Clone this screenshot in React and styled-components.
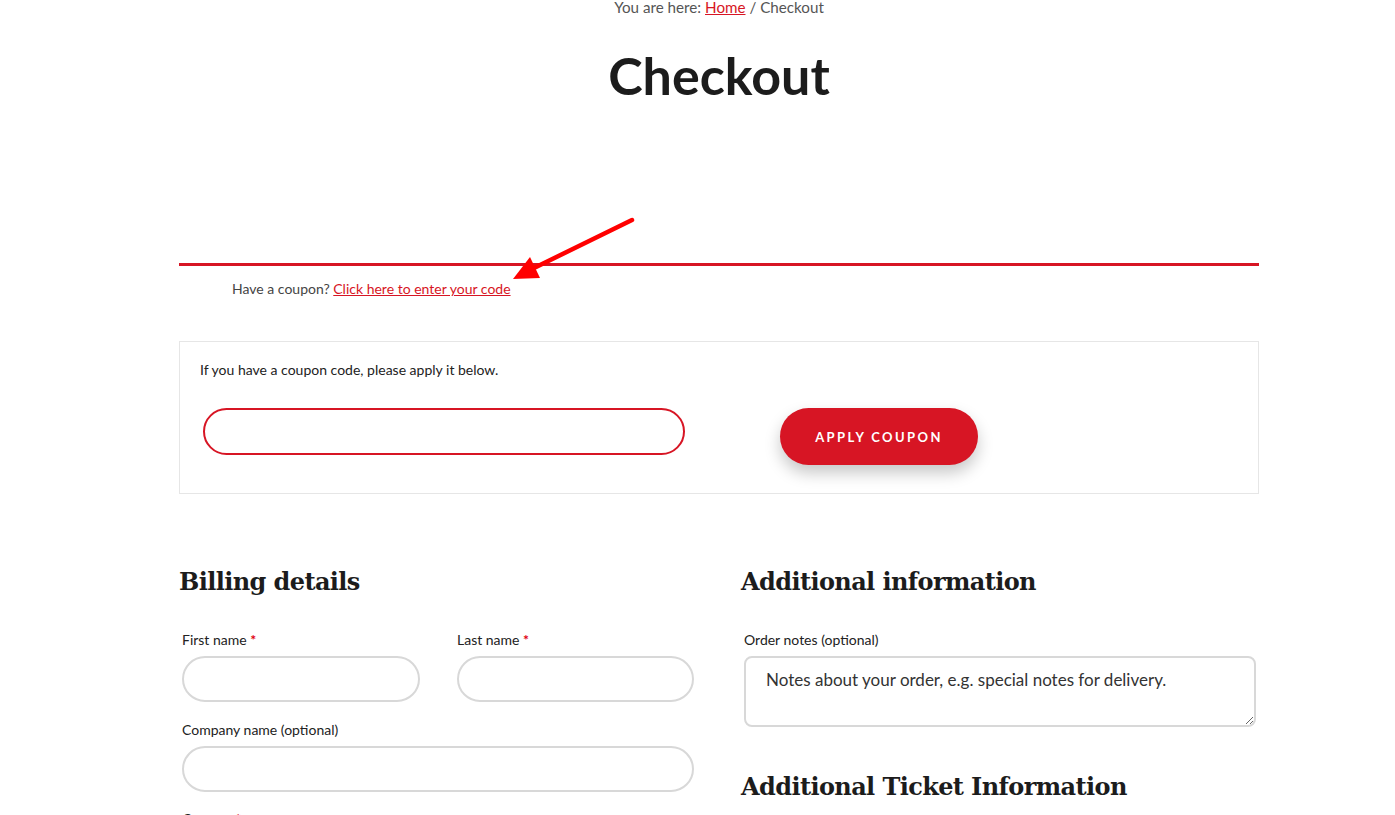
import React from "react";
import styled, { createGlobalStyle } from "styled-components";

const RED = "#d71524";

const GlobalStyle = createGlobalStyle`
  body {
    margin: 0;
    background: #fff;
    font-family: "Lato", "Noto Sans", sans-serif;
    color: #222;
  }
`;

const Page = styled.div`
  width: 1080px;
  margin-left: 179px;
  position: relative;
`;

const Breadcrumb = styled.div`
  text-align: center;
  font-size: 15.2px;
  line-height: 15px;
  color: #555;
  a {
    color: ${RED};
    text-decoration: underline;
  }
`;

const Title = styled.h1`
  margin: 32px 0 0;
  text-align: center;
  font-size: 52px;
  line-height: 56px;
  font-weight: 700;
  color: #1c1c1c;
`;

const Notice = styled.div`
  margin-top: 160px;
  border-top: 3px solid ${RED};
  padding: 14px 0 0 53px;
  font-size: 14px;
  line-height: 18px;
  color: #444;
  a {
    color: ${RED};
    text-decoration: underline;
  }
`;

const CouponBox = styled.form`
  margin-top: 43px;
  border: 1px solid #e6e6e6;
  padding: 19px 20px 28px;
  box-sizing: border-box;
`;

const CouponHint = styled.p`
  margin: 0;
  font-size: 14px;
  line-height: 18px;
  color: #222;
`;

const CouponRow = styled.div`
  display: flex;
  align-items: flex-start;
  gap: 95px;
  margin-top: 29px;
  padding-left: 3px;
`;

const CouponInput = styled.input`
  width: 482px;
  height: 47px;
  box-sizing: border-box;
  border: 2px solid ${RED};
  border-radius: 24px;
  outline: none;
`;

const ApplyButton = styled.button`
  width: 198px;
  height: 57px;
  border: none;
  border-radius: 29px;
  background: ${RED};
  color: #fff;
  font-family: inherit;
  font-weight: 700;
  font-size: 13px;
  letter-spacing: 2.4px;
  box-shadow: 0 8px 16px rgba(0, 0, 0, 0.22);
`;

const Columns = styled.div`
  display: grid;
  grid-template-columns: 515px 518px;
  column-gap: 47px;
  margin-top: 70px;
`;

const Column = styled.section`
  display: flex;
  flex-direction: column;
`;

const Heading = styled.h2`
  margin: ${({ $top }) => $top || 0}px 0 ${({ $gap }) => $gap || 0}px;
  font-family: "DejaVu Serif", "Liberation Serif", serif;
  font-size: 24px;
  line-height: 36px;
  font-weight: 700;
  color: #1c1c1c;
  letter-spacing: -0.6px;
`;

const FieldRow = styled.div`
  display: grid;
  grid-template-columns: 238px 237px;
  column-gap: 37px;
  padding-left: 3px;
  margin-bottom: 19px;
`;

const Field = styled.div`
  display: flex;
  flex-direction: column;
  padding: 0 ${({ $right }) => $right || 0}px 0 ${({ $inset }) => ($inset === undefined ? 3 : $inset)}px;
  margin-bottom: ${({ $bottom }) => ($bottom === undefined ? 18 : $bottom)}px;
`;

const Label = styled.label`
  font-size: 14px;
  line-height: 18px;
  color: #222;
  margin-bottom: 7px;
  span {
    color: #e0000f;
    font-weight: 700;
  }
`;

const TextInput = styled.input`
  height: 46px;
  box-sizing: border-box;
  border: 2px solid #d8d8d8;
  border-radius: 23px;
  outline: none;
  width: 100%;
`;

const Notes = styled.textarea`
  height: 71px;
  box-sizing: border-box;
  border: 2px solid #d8d8d8;
  border-radius: 8px;
  padding: 10px 20px;
  font-family: inherit;
  font-size: 17px;
  line-height: 24px;
  color: #333;
  outline: none;
  &::placeholder {
    color: #333;
  }
`;

const Arrow = styled.svg`
  position: absolute;
  left: 330px;
  top: 215px;
  overflow: visible;
`;

export default function App() {
  return (
    <>
      <GlobalStyle />
      <Page>
        <Breadcrumb>
          You are here: <a href="#">Home</a> / Checkout
        </Breadcrumb>
        <Title>Checkout</Title>
        <Notice>
          Have a coupon? <a href="#">Click here to enter your code</a>
        </Notice>
        <Arrow width="125" height="65" viewBox="0 0 125 65">
          <line x1="123" y1="5" x2="25" y2="53" stroke="#ff0000" strokeWidth="4.5" strokeLinecap="round" />
          <polygon points="4,64 31,63 21,42" fill="#ff0000" />
        </Arrow>
        <CouponBox onSubmit={(e) => e.preventDefault()}>
          <CouponHint>If you have a coupon code, please apply it below.</CouponHint>
          <CouponRow>
            <CouponInput type="text" />
            <ApplyButton type="submit">APPLY COUPON</ApplyButton>
          </CouponRow>
        </CouponBox>
        <Columns>
          <Column>
            <Heading $gap={31}>Billing details</Heading>
            <FieldRow>
              <Field $inset={0} $bottom={0}>
                <Label>First name <span>*</span></Label>
                <TextInput type="text" />
              </Field>
              <Field $inset={0} $bottom={0}>
                <Label>Last name <span>*</span></Label>
                <TextInput type="text" />
              </Field>
            </FieldRow>
            <Field>
              <Label>Company name (optional)</Label>
              <TextInput type="text" />
            </Field>
            <Field>
              <Label>Country <span>*</span></Label>
              <TextInput type="text" />
            </Field>
          </Column>
          <Column>
            <Heading $gap={31}>Additional information</Heading>
            <Field $right={3} $bottom={0}>
              <Label>Order notes (optional)</Label>
              <Notes placeholder="Notes about your order, e.g. special notes for delivery." />
            </Field>
            <Heading $top={42}>Additional Ticket Information</Heading>
          </Column>
        </Columns>
      </Page>
    </>
  );
}
